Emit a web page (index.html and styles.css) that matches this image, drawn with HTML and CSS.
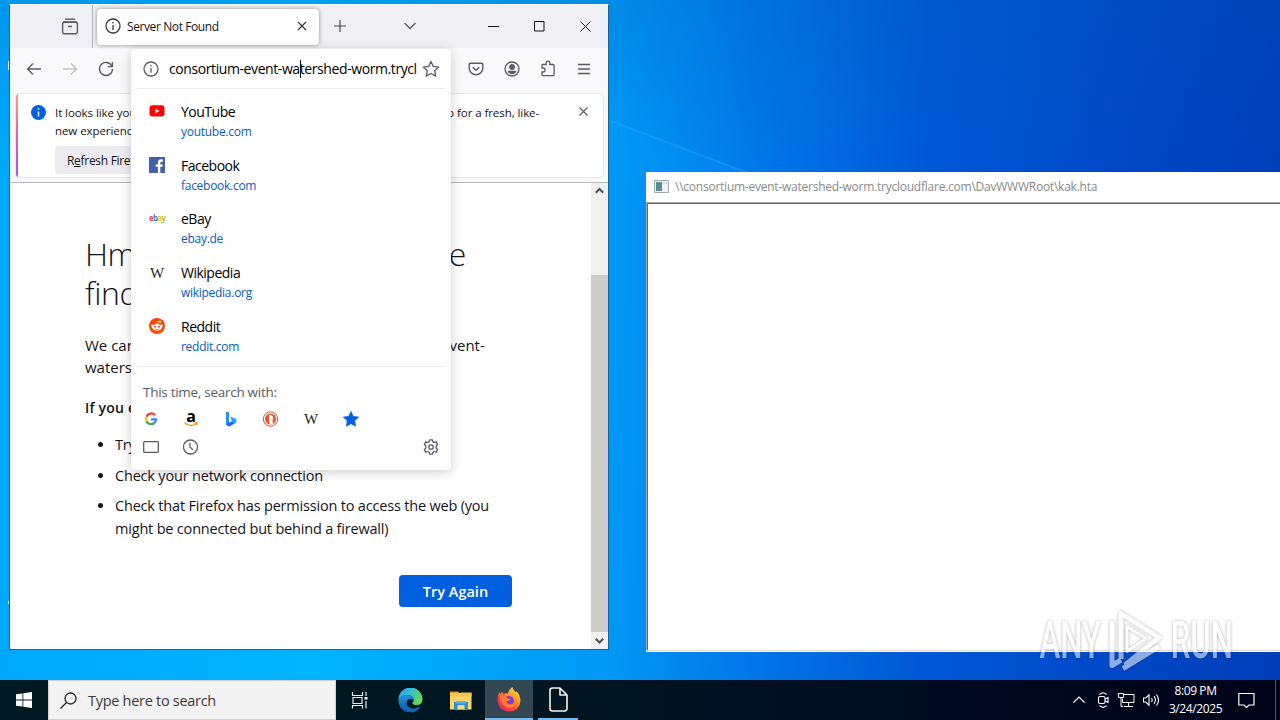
FILE: index.html
```
<!DOCTYPE html>
<html lang="en">
<head>
    <meta charset="UTF-8">
    <meta name="viewport" content="width=device-width, initial-scale=1.0">
    <title>Desktop</title>
    <link rel="stylesheet" href="styles.css">
</head>
<body>
<div class="desktop">
    <svg class="beam" width="160" height="60" viewBox="0 0 160 60"><path d="M0 2 140 55" stroke="#1fa2ff" stroke-width="2" opacity=".5"/><path d="M0 3 140 56V60H0z" fill="#009cff" opacity=".22"/></svg>
    <span class="label-bit bit-top"></span>
    <span class="label-bit bit-bottom"></span>

    <!-- Firefox -->
    <div class="browser">
        <div class="tabs">
            <div class="tabs-left">
                <svg width="18" height="18" viewBox="0 0 18 18" fill="none" stroke="#5b5b66" stroke-width="1.4"><path d="M4 1.200h10"/><rect x="1.600" y="4" width="14.800" height="11.800" rx="2.200"/><path d="M2 4.200h14M7 8.500h4"/></svg>
            </div>
            <div class="tab">
                <svg width="16" height="16" viewBox="0 0 16 16" fill="none" stroke="#3a3944" stroke-width="1.3"><circle cx="8" cy="8" r="7"/><path d="M8 7v5M8 4v1.6"/></svg>
                <span class="tab-title">Server Not Found</span>
                <svg width="10" height="10" viewBox="0 0 10 10" stroke="#33323d" stroke-width="1.2"><path d="M1 1l8 8M9 1L1 9"/></svg>
            </div>
            <svg class="tab-plus" width="12" height="12" viewBox="0 0 12 12" stroke="#4b4a55" stroke-width="1.2"><path d="M6 0v12M0 6h12"/></svg>
            <svg class="tab-list" width="12" height="8" viewBox="0 0 12 8" fill="none" stroke="#5b5b66" stroke-width="1.3"><path d="M.5 1L6 6.500 11.500 1"/></svg>
            <div class="window-buttons">
                <svg width="11" height="11" viewBox="0 0 11 11" stroke="#15141a"><path d="M0 5.500h11"/></svg>
                <svg width="11" height="11" viewBox="0 0 11 11" fill="none" stroke="#15141a"><path d="M.5.5h9.500v9.500H.5z"/></svg>
                <svg width="11" height="11" viewBox="0 0 11 11" stroke="#15141a"><path d="M.5.5l10 10M10.500.5l-10 10"/></svg>
            </div>
        </div>

        <div class="toolbar">
            <div class="nav-buttons">
                <svg width="16" height="14" viewBox="0 0 16 14" fill="none" stroke="#5b5b66" stroke-width="1.3"><path d="M7 1.500L1.500 7 7 12.500M1.500 7H15"/></svg>
                <svg width="16" height="14" viewBox="0 0 16 14" fill="none" stroke="#c0c0c6" stroke-width="1.3"><path d="M9 1.500L14.500 7 9 12.500M14.500 7H1"/></svg>
                <svg width="16" height="16" viewBox="0 0 16 16" fill="none" stroke="#5b5b66" stroke-width="1.4"><path d="M13.800 5A6.500 6.500 0 1 0 14.500 8"/><path d="M14.400 1v4.600H9.800"/></svg>
            </div>
            <div class="tool-buttons">
                <svg width="16" height="16" viewBox="0 0 16 16" fill="none" stroke="#5b5b66" stroke-width="1.400"><path d="M2.500 2.200h11q1.300 0 1.300 1.300V7a6.800 6.800 0 0 1-13.600 0V3.500q0-1.300 1.300-1.300z"/><path d="M4.800 6.300L8 9.300l3.200-3"/></svg>
                <svg width="16" height="16" viewBox="0 0 16 16" fill="none" stroke="#5b5b66" stroke-width="1.300"><circle cx="8" cy="8" r="7"/><circle cx="8" cy="6" r="2.300" fill="#5b5b66"/><path d="M4.500 10.300h7Q10.800 12.600 8 12.600t-3.500-2.300z" fill="#5b5b66"/></svg>
                <svg width="16" height="17" viewBox="0 0 16 17" fill="none" stroke="#5b5b66" stroke-width="1.300"><path d="M2 6.200V5.500q0-1 1-1h3.200V3a1.800 1.800 0 0 1 3.600 0v1.500h3q1.300 0 1.300 1.200V14.500q0 1.200-1.200 1.200H3.200Q2 15.700 2 14.500V12H3a1.900 1.900 0 0 0 0-4H2z"/></svg>
                <svg class="menu" width="12" height="12" viewBox="0 0 12 12" stroke="#5b5b66" stroke-width="1.300"><path d="M0 1.500h12M0 6h12M0 10.500h12"/></svg>
            </div>
        </div>

        <div class="notice">
            <svg class="notice-info" width="15" height="15" viewBox="0 0 15 15"><circle cx="7.500" cy="7.500" r="7.500" fill="#0060df"/><path d="M7.500 6.400v5M7.500 3.300v1.700" stroke="#fff" stroke-width="1.400"/></svg>
            <div class="notice-body">
                <p>It looks like you haven’t started Firefox in a while. Do you want to clean it up for a fresh, like-<br>new experience? And by the way, welcome back!</p>
                <button class="refresh">R<u>e</u>fresh Firefox…</button>
            </div>
            <svg class="notice-close" width="9" height="9" viewBox="0 0 9 9" stroke="#5b5b66" stroke-width="1.100"><path d="M.5.5l8 8M8.500.5l-8 8"/></svg>
        </div>

        <div class="page">
            <div class="page-content">
                <h1>Hmm. We’re having trouble<br>finding that site.</h1>
                <p class="desc">We can’t connect to the server at www.consortium-event-<br>watershed-worm.trycloudflare.com.</p>
                <p class="sub">If you entered the right address, you can:</p>
                <ul>
                    <li>Try again later</li>
                    <li>Check your network connection</li>
                    <li>Check that Firefox has permission to access the web (you<br>might be connected but behind a firewall)</li>
                </ul>
                <button class="try-again">Try Again</button>
            </div>
            <div class="scrollbar">
                <svg width="17" height="17" viewBox="0 0 17 17" fill="none" stroke="#505050" stroke-width="2"><path d="M4.800 9.700l3.700-3.700 3.700 3.700"/></svg>
                <div class="thumb"></div>
                <svg width="17" height="17" viewBox="0 0 17 17" fill="none" stroke="#505050" stroke-width="2"><path d="M4.800 6.800l3.700 3.700 3.700-3.700"/></svg>
            </div>
        </div>

        <!-- address bar dropdown -->
        <div class="urlbar">
            <div class="url-row">
                <svg width="16" height="16" viewBox="0 0 16 16" fill="none" stroke="#5b5b66" stroke-width="1.300"><circle cx="8" cy="8" r="7"/><path d="M8 7v4.800M8 4v1.600"/></svg>
                <span class="url">consortium-event-wa<i class="caret"></i>tershed-worm.trycl</span>
                <svg width="18" height="18" viewBox="0 0 18 18" fill="none" stroke="#5b5b66" stroke-width="1.300" stroke-linejoin="round"><path d="M9 1.500l2.300 4.900 5.300.7-3.900 3.700 1 5.300L9 13.500l-4.700 2.600 1-5.300L1.400 7.100l5.300-.7z"/></svg>
            </div>
            <div class="results">
                <div class="result">
                    <svg width="16" height="16" viewBox="0 0 16 16"><rect x=".5" y="2.300" width="15" height="11.200" rx="3" fill="#f00"/><path d="M6.500 5.500l4 2.400-4 2.400z" fill="#fff"/></svg>
                    <div><b>YouTube</b><a>youtube.com</a></div>
                </div>
                <div class="result">
                    <svg width="16" height="16" viewBox="0 0 16 16"><path d="M0 0h16v16H0z" fill="#4261a8"/><path d="M11.300 16V9.800h2.200l.3-2.400h-2.500V5.900q0-1.200 1.200-1.200h1.400V2.500q-5-.8-5 2.900v2H6.700v2.400h2.200V16z" fill="#fff"/></svg>
                    <div><b>Facebook</b><a>facebook.com</a></div>
                </div>
                <div class="result">
                    <span class="ebay"><i>e</i><i>b</i><i>a</i><i>y</i></span>
                    <div><b>eBay</b><a>ebay.de</a></div>
                </div>
                <div class="result">
                    <span class="wiki">W</span>
                    <div><b>Wikipedia</b><a>wikipedia.org</a></div>
                </div>
                <div class="result">
                    <svg width="16" height="16" viewBox="0 0 16 16"><circle cx="8" cy="8" r="8" fill="#ff4500"/><ellipse cx="8" cy="9.300" rx="4.800" ry="3.400" fill="#fff"/><circle cx="3.300" cy="7.800" r="1.300" fill="#fff"/><circle cx="12.700" cy="7.800" r="1.300" fill="#fff"/><circle cx="11" cy="3.800" r="1.100" fill="#fff"/><path d="M8 6.500l.7-3 2 .4" fill="none" stroke="#fff" stroke-width=".8"/><circle cx="6" cy="8.800" r="1" fill="#ff4500"/><circle cx="10" cy="8.800" r="1" fill="#ff4500"/><path d="M6 11q2 1.200 4 0" fill="none" stroke="#ff4500" stroke-width=".7"/></svg>
                    <div><b>Reddit</b><a>reddit.com</a></div>
                </div>
            </div>
            <div class="engines">
                <p>This time, search with:</p>
                <div class="engine-row">
                    <svg width="16" height="16" viewBox="0 0 16 16" fill="none" stroke-width="2.300"><path d="M12.100 4.300A5 5 0 0 0 3.600 5.600" stroke="#ea4335"/><path d="M3.600 5.600a5 5 0 0 0 0 4.800" stroke="#fbbc05"/><path d="M3.600 10.400a5 5 0 0 0 7.700 1.600" stroke="#34a853"/><path d="M11.300 12A5 5 0 0 0 13 8.300H8" stroke="#4285f4"/></svg>
                    <span class="amazon">a<svg width="14" height="5" viewBox="0 0 14 5" fill="none" stroke="#f90" stroke-width="1.300"><path d="M.5.8Q6.500 5.800 12.500 1.500M10.500.8h2.700l-.5 2.400"/></svg></span>
                    <svg width="16" height="16" viewBox="0 0 16 16"><path d="M3 .5l3 1v10.500l-3 2.200z" fill="#2a8cf0"/><path d="M7.500 5.500l5.800 2.600v3.700L6 15.500 3 13.500l5.800-3z" fill="#26a4f5"/><path d="M3 13.500l5.500-3 2.500 2-5 3z" fill="#1b6be5"/></svg>
                    <svg width="16" height="16" viewBox="0 0 16 16"><circle cx="7.500" cy="8" r="7.200" fill="#fff" stroke="#d9532c" stroke-width="1"/><circle cx="7.500" cy="8" r="5.500" fill="#de5833"/><path d="M6 4.200q2.800-1 3.800 1.300.8 2-.2 3.500l.2 3.900q-2 .6-3.200.1z" fill="#fff"/><path d="M8.200 7.800h2.400v1.100H8.200z" fill="#fdbd2e"/></svg>
                    <span class="wiki">W</span>
                    <svg width="16" height="16" viewBox="0 0 16 16"><path d="M8 .3l2.300 5 5.500.7-4 3.800 1 5.600L8 12.700l-4.800 2.700 1-5.600-4-3.800 5.500-.7z" fill="#0060df" stroke="#0060df" stroke-width=".5" stroke-linejoin="round"/></svg>
                </div>
                <div class="engine-row local">
                    <svg width="16" height="16" viewBox="0 0 16 16" fill="none" stroke="#5b5b66" stroke-width="1.300"><rect x=".7" y="2.600" width="14.600" height="10.800" rx="1"/></svg>
                    <svg width="16" height="16" viewBox="0 0 16 16" fill="none" stroke="#5b5b66" stroke-width="1.300"><circle cx="7.500" cy="8" r="7"/><path d="M7 3.800v4.500l3 2.400"/></svg>
                    <svg class="gear" width="16" height="16" viewBox="0 0 16 16" fill="none" stroke="#5b5b66" stroke-width="1.300" stroke-linejoin="round"><path d="M6.600.8h2.800l.5 2 1.300.8 2-.7 1.500 2.400L13.200 7v2l1.500 1.700-1.500 2.400-2-.6-1.300.7-.5 2H6.600l-.5-2-1.300-.7-2 .6-1.500-2.400L2.800 9V7L1.300 5.300l1.500-2.400 2 .7 1.300-.8z"/><circle cx="8" cy="8" r="2.200"/></svg>
                </div>
            </div>
        </div>
    </div>

    <!-- hta window -->
    <div class="hta">
        <div class="hta-title">
            <svg width="15" height="13" viewBox="0 0 15 13"><path d="M.5.5h14v12H.5z" fill="#eef2f5" stroke="#a0a6aa"/><path d="M2 2h6v9H2z" fill="#4f9290"/><path d="M5 2h3v9H5z" fill="#6685a0"/><path d="M9.500 3h1M12 3h1" stroke="#888"/></svg>
            <span>\\consortium-event-watershed-worm.trycloudflare.com\DavWWWRoot\kak.hta</span>
        </div>
        <div class="hta-body"></div>
    </div>

    <div class="watermark">
        <span class="word"><em>ANY</em></span>
        <svg width="56" height="64" viewBox="0 0 56 64" fill="none" stroke="#fff" stroke-linejoin="round"><path d="M13 50V4.500L51 28.500 17 56" stroke-width="5"/><path d="M4 11.500V56.500L13 51M15 59.500l36-22" stroke-width="5"/><path d="M19 17.500v25L38 29.500z" stroke-width="3"/></svg>
        <span class="word"><em>RUN</em></span>
    </div>

    <!-- taskbar -->
    <div class="taskbar">
        <div class="start">
            <svg width="16" height="16" viewBox="0 0 16 16" fill="#fff"><path d="M0 2.300l6.500-.9v6.200H0zM7.300 1.300L16 0v7.600H7.300zM0 8.400h6.500v6.200L0 13.700zM7.300 8.400H16V16l-8.700-1.300z"/></svg>
        </div>
        <div class="search">
            <svg width="17" height="17" viewBox="0 0 17 17" fill="none" stroke="#222" stroke-width="1.300"><circle cx="10.500" cy="6.500" r="5.500"/><path d="M6.500 10.500L.5 16.500"/></svg>
            <span>Type here to search</span>
        </div>
        <div class="apps">
            <div class="app">
                <svg width="18" height="17" viewBox="0 0 18 17" fill="none" stroke="#e8ecee" stroke-width="1.200"><path d="M1.500 0v3.500h10V0M1.500 16.500v-3h10v3M2 5.500h9v6H2zM15 0v4M15 9v7.500"/><path d="M13.500 5h3v2.500h-3z" fill="#fff" stroke="none"/></svg>
            </div>
            <div class="app edge">
                <svg width="25" height="25" viewBox="0 0 25 25"><defs><linearGradient id="e1" x1="0" y1="0" x2="1" y2=".3"><stop offset="0" stop-color="#2aa5e6"/><stop offset=".6" stop-color="#35c1c8"/><stop offset="1" stop-color="#64d650"/></linearGradient><linearGradient id="e2" x1="0" y1="0" x2="0" y2="1"><stop offset="0" stop-color="#1f96e2"/><stop offset="1" stop-color="#0c59a4"/></linearGradient></defs><path d="M.5 12A12 12 0 0 1 24.500 11q.3 6-6 6-4.500 0-4-2.500 1.500-1 1-3.500-1-3.500-5.500-4Q3 7 .5 12z" fill="url(#e1)"/><path d="M.5 12Q2.500 7 8.500 7q6 .3 7 4.500-6-2-7 3-.5 7 7 8.500Q11 25.500 6.500 23 .5 19.500.5 12z" fill="url(#e2)"/><path d="M9 13q-1.200 6 5 7.500 4 .7 8.500-2-3 5-8 6-7.500-1-8-7 .2-3 2.500-4.500z" fill="#1565b4"/></svg>
            </div>
            <div class="app">
                <svg width="22" height="19" viewBox="0 0 22 19"><path d="M0 .5h8l2 2H0z" fill="#e59a18"/><path d="M0 2h21.500v16.500H0z" fill="#fcd56a"/><path d="M0 2.500h9L11 1.500h10.500v4H0z" fill="#f8c64c"/><path d="M4 11h14v7.500H4z" fill="#2b8fd4"/><path d="M7.500 14h7v4.500h-7z" fill="#fcd56a"/><path d="M6 10h10v2.500H6z" fill="#5fb4e8"/></svg>
            </div>
            <div class="app active">
                <svg width="24" height="25" viewBox="0 0 24 25"><defs><linearGradient id="f1" x1="1" y1="0" x2=".2" y2="1"><stop offset="0" stop-color="#fff04f"/><stop offset=".4" stop-color="#ffa022"/><stop offset=".7" stop-color="#ff4a3c"/><stop offset="1" stop-color="#e62073"/></linearGradient></defs><path d="M2 5l1.500 2L5 4.500 6.500 7Q9 6 11 6.500 12 2 15.500 0 16 3.500 19 5.500l.5-1.500Q23.500 9 23.500 14 22.500 24 12 24.500 1.500 24 .8 14 .5 9 2 5z" fill="url(#f1)"/><circle cx="12" cy="14" r="5" fill="#7a3bd8"/><path d="M3 9q5 0 7.500 2 2 .5 3 1-2 2.500-4 2 0 3 4 3.500 4-.5 4.500-4 1 7-6 7.500-7-.5-9-12z" fill="#ff7d2b"/></svg>
            </div>
            <div class="app open">
                <svg width="19" height="25" viewBox="0 0 19 25" fill="none" stroke="#f4f4f4" stroke-width="1.600" stroke-linejoin="round"><path d="M3.500 1H11l7 7v13q0 3-2.500 3h-12Q1 24 1 21.500v-18Q1 1 3.500 1zM11 1v7h7"/></svg>
            </div>
        </div>
        <div class="tray">
            <svg class="chevron" width="12" height="8" viewBox="0 0 12 8" fill="none" stroke="#fff" stroke-width="1.200"><path d="M.5 6.500L6 1l5.500 5.500"/></svg>
            <svg width="13" height="18" viewBox="0 0 13 18" fill="none" stroke="#fff" stroke-width="1.100"><rect x="1.500" y="5.500" width="6.500" height="7" rx="1.500"/><path d="M8 8.300l3-1.800v5L8 9.800M2.500 3.500Q6 0 9.500 3.500M2.500 14.700Q6 18 9.500 14.700"/></svg>
            <svg width="17" height="16" viewBox="0 0 17 16" fill="none" stroke="#fff"><path d="M5.500 2.500h10.500v8H4.500v-4M10.500 10.500v4M6 14.500h9M.5 1.500h5v4h-5zM3 5.500v9h2"/></svg>
            <svg width="18" height="14" viewBox="0 0 18 14" fill="none" stroke="#fff" stroke-width="1.100"><path d="M.5 5h2.300L6 1.800v10.400L2.800 9H.5zM8.500 5q1.400 2 0 4M11 3.200q2.800 3.800 0 7.600M13.500 1.500q4 5.500 0 11"/></svg>
            <div class="clock"><span>8:09 PM</span><span>3/24/2025</span></div>
            <svg class="action" width="17" height="17" viewBox="0 0 17 17" fill="none" stroke="#fff" stroke-width="1.200"><path d="M.8 1.500h15.200v11.500h-5L8.500 15.500 6 13H.8z"/></svg>
            <span class="peek"></span>
        </div>
    </div>
</div>
</body>
</html>
```
FILE: styles.css
```
* {
    box-sizing: border-box;
}

body {
    margin: 0;
    font-family: "Open Sans", "Noto Sans", sans-serif;
    color: #15141a;
}

p, h1, ul {
    margin: 0;
}

svg {
    flex: none;
    display: block;
}

button {
    border: none;
    border-radius: 4px;
    font-family: inherit;
}

.desktop {
    position: relative;
    width: 1280px;
    height: 720px;
    overflow: hidden;
    background: linear-gradient(to bottom, rgba(0, 90, 180, 0.22), transparent 22%),
        linear-gradient(91deg, #00a8fc 0%, #00b4fe 25%, #0098f5 48%, #007aea 58%, #0058d6 72%, #0048c6 88%, #003cb8 100%);
}

.beam {
    position: absolute;
    left: 608px;
    top: 118px;
}

.label-bit {
    position: absolute;
    left: 8px;
    width: 1px;
    background: #d8f0ff;
}

.bit-top {
    top: 61px;
    height: 9px;
}

.bit-bottom {
    top: 601px;
    height: 3px;
}

/******/
/* BROWSER */
/******/

.browser {
    position: absolute;
    left: 9px;
    top: 4px;
    width: 600px;
    height: 646px;
    display: flex;
    flex-direction: column;
    background: #f9f9fb;
    border: 1px solid #17639c;
    border-top-color: #f9f9fb;
}

.tabs {
    display: flex;
    align-items: center;
    height: 43px;
    background: #f0f0f4;
}

.tabs-left {
    display: flex;
    align-items: center;
    width: 83px;
    height: 43px;
    padding-left: 51px;
    border-right: 1px solid #b5b5bd;
}

.tab {
    display: flex;
    align-items: center;
    width: 222px;
    height: 36px;
    margin-left: 4px;
    padding: 0 12px 0 8px;
    gap: 6px;
    background: #fff;
    border-radius: 4px;
    box-shadow: 0 0 4px rgba(0, 0, 0, 0.4);
}

.tab-title {
    flex: 1;
    font-size: 12px;
    letter-spacing: -0.4px;
    white-space: nowrap;
}

.tab svg,
.tab-plus,
.tab-list,
.window-buttons {
    margin-top: -1px;
}

.tab-plus {
    margin-left: 15px;
}

.tab-list {
    margin-left: 58px;
}

.window-buttons {
    display: flex;
    gap: 35px;
    margin-left: auto;
    margin-right: 17px;
}

.toolbar {
    display: flex;
    align-items: center;
    justify-content: space-between;
    height: 41px;
    padding: 0 18px 0 16px;
}

.nav-buttons {
    display: flex;
    align-items: center;
    gap: 20px;
}

.tool-buttons {
    display: flex;
    align-items: center;
    gap: 20px;
}

.menu {
    margin-left: 2px;
}

.notice {
    position: relative;
    display: flex;
    height: 85px;
    margin: 4px 4px 0 5px;
    padding: 12px 15px 0 16px;
    background: #fff;
    border: 1px solid #e6e6ea;
    border-radius: 4px;
    overflow: hidden;
}

.notice::before {
    content: "";
    position: absolute;
    left: 0;
    top: 0;
    width: 2px;
    height: 85px;
    background: linear-gradient(#ff9a76, #d966a8 50%, #9059ff);
}

.notice-info {
    margin-left: -1px;
    margin-top: -1px;
}

.notice-body {
    flex: 1;
    margin-left: 9px;
    margin-top: -2px;
}

.notice p {
    font-size: 11.5px;
    line-height: 18px;
    letter-spacing: -0.07px;
    white-space: nowrap;
}

.refresh {
    display: block;
    width: 110px;
    height: 28px;
    margin-top: 6px;
    padding: 0 12px;
    background: #ececf0;
    color: #15141a;
    font-size: 12px;
    letter-spacing: -0.3px;
    text-align: left;
    white-space: nowrap;
}

.notice-close {
    margin-top: 1px;
}

/******/
/* ERROR PAGE */
/******/

.page {
    display: flex;
    flex: 1;
    margin-top: 4px;
    border-top: 1px solid #b8b8bc;
    background: #fff;
}

.page-content {
    flex: 1;
    padding: 51px 79px 0 75px;
}

h1 {
    font-size: 32px;
    font-weight: 300;
    line-height: 39px;
    letter-spacing: -0.4px;
    white-space: nowrap;
}

.desc {
    margin-top: 22px;
    font-size: 15px;
    line-height: 22px;
    white-space: nowrap;
}

.sub {
    margin-top: 19px;
    font-size: 14px;
    font-weight: 600;
    line-height: 22px;
    letter-spacing: 0.2px;
    white-space: nowrap;
}

ul {
    margin-top: 14px;
    padding-left: 30px;
}

li {
    margin-bottom: 7.5px;
    font-size: 14.5px;
    line-height: 23px;
    letter-spacing: -0.19px;
    white-space: nowrap;
}

.try-again {
    display: block;
    width: 113px;
    height: 32px;
    margin: 35px 0 0 auto;
    background: #0060df;
    color: #fff;
    font-size: 14.5px;
    font-weight: 600;
}

.scrollbar {
    display: flex;
    flex-direction: column;
    justify-content: space-between;
    width: 17px;
    background: #f0f0f0;
}

.thumb {
    height: 357px;
    margin-top: auto;
    background: #cdcdcd;
}

/******/
/* URL DROPDOWN */
/******/

.urlbar {
    position: absolute;
    left: 121px;
    top: 44px;
    width: 320px;
    height: 421px;
    padding: 0 6px;
    background: #fff;
    border-radius: 4px;
    box-shadow: 0 2px 12px rgba(0, 0, 0, 0.2);
}

.url-row {
    display: flex;
    align-items: center;
    height: 40px;
    padding: 0 5px 0 6px;
    border-bottom: 1px solid #e9e9ec;
}

.url {
    width: 249px;
    margin: 0 4px 0 10px;
    color: #000;
    font-size: 14px;
    letter-spacing: -0.41px;
    white-space: nowrap;
}

.caret {
    display: inline-block;
    width: 1px;
    height: 18px;
    margin-right: -1px;
    background: #000;
    vertical-align: -4px;
}

.results {
    height: 278px;
    padding: 12px 12px 0;
    border-bottom: 1px solid #e9e9ec;
}

.result {
    display: flex;
    gap: 16px;
    height: 53.7px;
}

.result > svg {
    margin-top: 2px;
}

.result b {
    display: block;
    color: #000;
    font-size: 14px;
    font-weight: 400;
    line-height: 22px;
    letter-spacing: -0.5px;
}

.result a {
    display: block;
    color: #0a5bc4;
    font-size: 12px;
    line-height: 18px;
    letter-spacing: -0.28px;
}

.ebay {
    width: 16px;
    margin-top: 4px;
    font-size: 8px;
    font-weight: 600;
    line-height: 12px;
    letter-spacing: -0.6px;
}

.ebay i {
    font-style: normal;
    color: #e53238;
}

.ebay i:nth-child(2) {
    color: #0064d2;
}

.ebay i:nth-child(3) {
    color: #f5af02;
}

.ebay i:nth-child(4) {
    color: #86b817;
}

.wiki {
    width: 16px;
    font-family: "Liberation Serif", serif;
    font-size: 15px;
    line-height: 22px;
    text-indent: 1px;
    color: #222;
}

.engines {
    padding: 14px 6px 0;
}

.engines p {
    color: #5b5b66;
    font-size: 13.5px;
    line-height: 22px;
    letter-spacing: -0.28px;
    white-space: nowrap;
}

.engine-row {
    display: flex;
    align-items: center;
    gap: 24px;
    height: 28px;
    margin-top: 2px;
}

.local {
    margin-top: 0;
}

.gear {
    margin-left: auto;
}

.amazon {
    width: 16px;
    color: #000;
    font-size: 16px;
    font-weight: 700;
    line-height: 11px;
    text-align: center;
}

.amazon svg {
    margin-left: 1px;
}

/******/
/* HTA WINDOW */
/******/

.hta {
    position: absolute;
    left: 646px;
    top: 172px;
    width: 640px;
    height: 480px;
    background: #fff;
}

.hta-title {
    display: flex;
    align-items: center;
    gap: 6px;
    height: 30px;
    padding: 0 8px 1px;
    color: #8a8a8a;
    font-size: 12px;
    letter-spacing: -0.24px;
    white-space: nowrap;
}

.hta-body {
    height: 449px;
    border: solid #a8a8a8;
    border-width: 1px 0 1px 1px;
    border-bottom-color: #dcdcdc;
    box-shadow: inset 1px 1px #696969;
}

.watermark {
    position: absolute;
    left: 1039px;
    top: 608px;
    display: flex;
    align-items: center;
    gap: 6px;
    color: #fff;
    opacity: 0.55;
    filter: drop-shadow(0 0 1.5px rgba(40, 40, 40, 0.7));
}

.word {
    display: flex;
    justify-content: center;
    width: 63px;
}

.word em {
    font-family: Roboto, sans-serif;
    font-size: 52px;
    font-style: normal;
    font-weight: 500;
    line-height: 66px;
    transform: scaleX(0.6);
}

/******/
/* TASKBAR */
/******/

.taskbar {
    position: absolute;
    left: 0;
    top: 680px;
    width: 1280px;
    height: 40px;
    display: flex;
    background: linear-gradient(90deg, #001a24, #001520 45%, #000a20 75%, #000519);
}

.start {
    display: flex;
    align-items: center;
    justify-content: center;
    width: 48px;
}

.search {
    display: flex;
    align-items: center;
    width: 288px;
    padding-left: 11px;
    gap: 11px;
    background: #f2f2f2;
    border: 1px solid #d0d0d0;
    color: #3a3a3a;
    font-size: 14.5px;
    letter-spacing: -0.29px;
}

.apps {
    display: flex;
}

.app {
    display: flex;
    align-items: center;
    justify-content: center;
    width: 48px;
}

.app.edge {
    width: 53px;
}

.app.active {
    width: 48px;
    background: #334852;
    border-bottom: 2px solid #76b9ed;
}

.app.open {
    width: 40px;
    margin-left: 5px;
    border-bottom: 2px solid #76b9ed;
}

.tray {
    display: flex;
    align-items: center;
    margin-left: auto;
    gap: 8px;
}

.chevron {
    margin-right: 4px;
}

.clock {
    display: flex;
    flex-direction: column;
    align-items: center;
    width: 53px;
    color: #fff;
    font-size: 12px;
    line-height: 18px;
    letter-spacing: -0.4px;
    white-space: nowrap;
}

.action {
    margin-left: 8px;
}

.peek {
    width: 1px;
    height: 40px;
    margin-left: 12px;
    margin-right: 4px;
    background: #4a5166;
}
```
